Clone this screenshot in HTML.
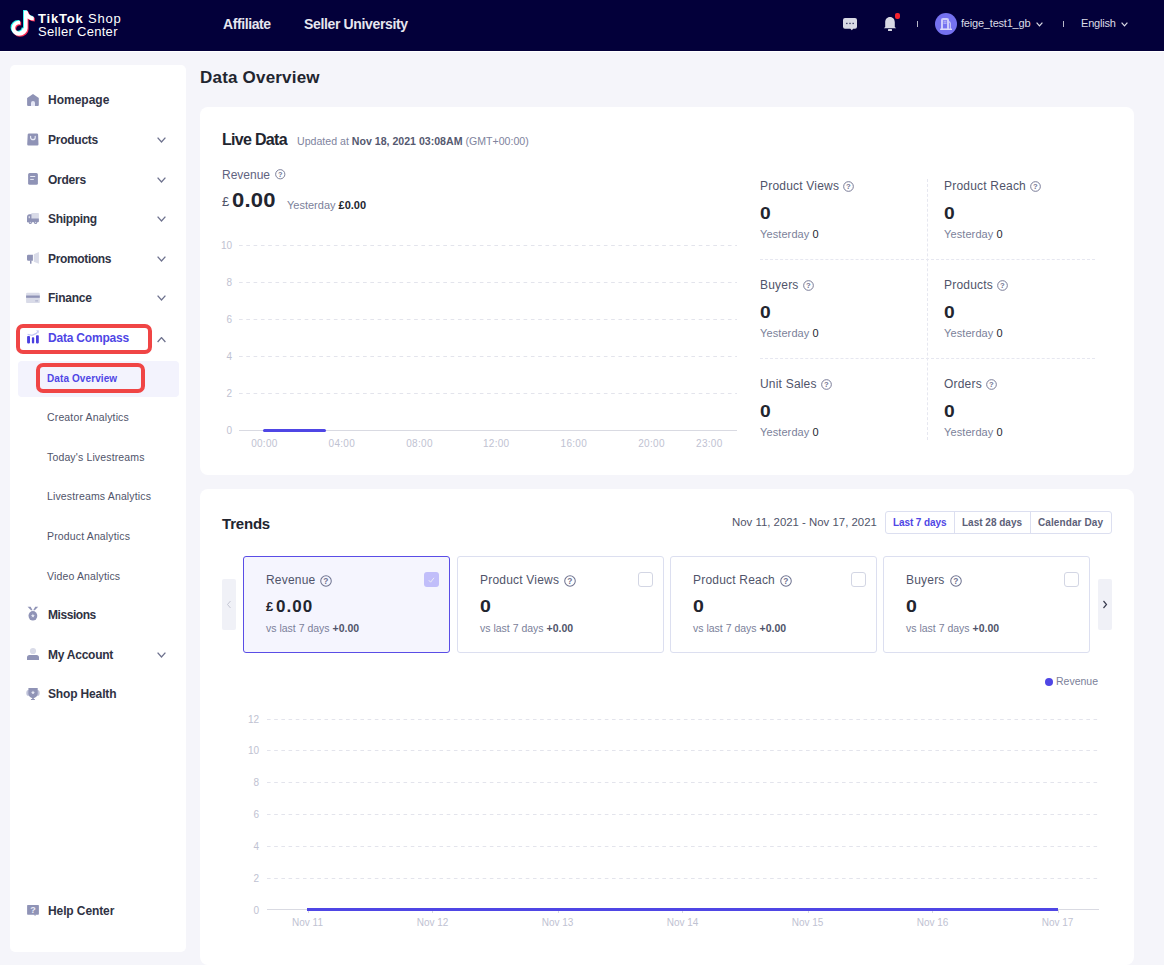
<!DOCTYPE html>
<html><head><meta charset="utf-8">
<style>
*{margin:0;padding:0;box-sizing:border-box}
html,body{width:1164px;height:965px;overflow:hidden;background:#f5f5fa;font-family:"Liberation Sans",sans-serif;color:#22252f}
.a{position:absolute;white-space:nowrap}
b{font-weight:bold}
</style></head><body>
<div class="a" style="left:0px;top:0px;width:1164px;height:51px;background:#03003a"></div>
<div class="a" style="left:0px;top:51px;width:1164px;height:1px;background:#fff"></div>
<svg class="a" style="left:9px;top:9px" width="30" height="32" viewBox="0 0 30 32"><path transform="translate(-0.9,-0.8)" fill="#25f4ee" d="M14.9 1.85H18.6Q19.3 7 24.8 7.8V11.6Q21 11.4 18.6 9.6V19.2A8.75 7.65 0 0 1 9.85 26.85A7.4 7.65 0 0 1 2.45 19.2A7.4 7.4 0 0 1 9.85 11.8H11.2V15.5A3.7 3.7 0 1 0 13.55 19.2H14.9Z"/><path transform="translate(1,1)" fill="#fe2c55" d="M14.9 1.85H18.6Q19.3 7 24.8 7.8V11.6Q21 11.4 18.6 9.6V19.2A8.75 7.65 0 0 1 9.85 26.85A7.4 7.65 0 0 1 2.45 19.2A7.4 7.4 0 0 1 9.85 11.8H11.2V15.5A3.7 3.7 0 1 0 13.55 19.2H14.9Z"/><path transform="translate(0,0)" fill="#fff" d="M14.9 1.85H18.6Q19.3 7 24.8 7.8V11.6Q21 11.4 18.6 9.6V19.2A8.75 7.65 0 0 1 9.85 26.85A7.4 7.65 0 0 1 2.45 19.2A7.4 7.4 0 0 1 9.85 11.8H11.2V15.5A3.7 3.7 0 1 0 13.55 19.2H14.9Z"/></svg>
<div class="a" style="left:38px;top:12px;font-size:13px;line-height:13px;font-weight:normal;color:#fff;letter-spacing:0.8px;"><b>TikTok</b> Shop</div>
<div class="a" style="left:38px;top:25px;font-size:13px;line-height:13px;font-weight:normal;color:#fff;letter-spacing:0.3px;">Seller Center</div>
<div class="a" style="left:223px;top:17px;font-size:14px;line-height:14px;font-weight:bold;color:#e6e6ef;letter-spacing:-0.4px;">Affiliate</div>
<div class="a" style="left:304px;top:17px;font-size:14px;line-height:14px;font-weight:bold;color:#e6e6ef;letter-spacing:-0.35px;">Seller University</div>
<svg class="a" style="left:843px;top:18px" width="14" height="13" viewBox="0 0 14 13"><path d="M2 0h10a2 2 0 0 1 2 2v6.8a2 2 0 0 1-2 2H10.2L8.8 12.3 7.4 10.8H2a2 2 0 0 1-2-2V2a2 2 0 0 1 2-2z" fill="#d8d9e4"/><rect x="3" y="4.8" width="1.6" height="1.3" fill="#4a4c70"/><rect x="6.2" y="4.8" width="1.6" height="1.3" fill="#4a4c70"/><rect x="9.4" y="4.8" width="1.6" height="1.3" fill="#4a4c70"/></svg>
<svg class="a" style="left:883px;top:16px" width="14" height="16" viewBox="0 0 14 16"><path d="M7 1c3 0 4.8 2.4 4.8 5.2V11l1.4 1.3H.8L2.2 11V6.2C2.2 3.4 4 1 7 1z" fill="#d8d9e4"/><rect x="5" y="13" width="4" height="2" rx=".5" fill="#d8d9e4"/></svg>
<div class="a" style="left:895px;top:13px;width:5px;height:6px;border-radius:2px;background:#f5222d"></div>
<div class="a" style="left:917px;top:21px;width:1px;height:6px;background:#b8b9c8"></div>
<div class="a" style="left:935px;top:13px;width:22px;height:22px;border-radius:50%;background:#7571f0"></div>
<svg class="a" style="left:939px;top:17px" width="14" height="14" viewBox="0 0 14 14"><path d="M2 13V3.1a2 2 0 0 1 2-2H8a2 2 0 0 1 2 2V13z" fill="#cfcdfa"/><rect x="4" y="3.2" width="4" height="8.4" fill="#7571f0"/><rect x="4.5" y="3.9" width="3" height=".7" fill="#cfcdfa"/><rect x="4.5" y="5.7" width="3" height=".8" fill="#e6e5fd"/><path d="M9.6 4.6Q11.3 4.9 11.3 6.4V13" fill="none" stroke="#cfcdfa" stroke-width="1.1"/><rect x="1.1" y="11.6" width="11.9" height="1.4" fill="#dcdafc"/></svg>
<div class="a" style="left:961px;top:18px;font-size:11px;line-height:11px;font-weight:normal;color:#dcdce6;letter-spacing:-0.2px;">feige_test1_gb</div>
<svg class="a" style="left:1036px;top:22px" width="7" height="4.5" viewBox="0 0 7 4.5"><path d="M0.6 0.6L3.5 3.9L6.4 0.6" fill="none" stroke="#dcdce6" stroke-width="1.2"/></svg>
<div class="a" style="left:1063px;top:21px;width:1px;height:6px;background:#b8b9c8"></div>
<div class="a" style="left:1081px;top:18px;font-size:11px;line-height:11px;font-weight:normal;color:#dcdce6;letter-spacing:-0.2px;">English</div>
<svg class="a" style="left:1121px;top:22px" width="7" height="4.5" viewBox="0 0 7 4.5"><path d="M0.6 0.6L3.5 3.9L6.4 0.6" fill="none" stroke="#dcdce6" stroke-width="1.2"/></svg>
<div class="a" style="left:10px;top:65px;width:176px;height:887px;background:#fff;border-radius:5px"></div>
<svg class="a" style="left:27px;top:93px" width="12" height="13" viewBox="0 0 12 13"><path d="M6 0.9L11.8 4.9V11.9a1 1 0 0 1-1 1H1.1a1 1 0 0 1-1-1V4.9z" fill="#8f93b6"/><path d="M4 13V10a2 2 0 0 1 4 0V13z" fill="#e6e8f6"/></svg>
<svg class="a" style="left:27px;top:133px" width="12" height="13" viewBox="0 0 12 13"><path d="M2 0.4H9.8a1.3 1.3 0 0 1 1.3 1.2L11.5 11.2a1.3 1.3 0 0 1-1.3 1.4H1.5a1.3 1.3 0 0 1-1.3-1.4L0.7 1.6a1.3 1.3 0 0 1 1.3-1.2z" fill="#8f93b6"/><path d="M3.6 3.3V4.4a2.3 2.3 0 0 0 4.6 0V3.3" fill="none" stroke="#e8eaf5" stroke-width="1.2" stroke-linecap="round"/></svg>
<svg class="a" style="left:27px;top:173px" width="12" height="12" viewBox="0 0 12 12"><rect x="1.1" y="0.1" width="9.8" height="11.6" rx="1.5" fill="#8f93b6"/><rect x="3.2" y="3" width="5" height="1" fill="#e8eaf5"/><rect x="3.2" y="5.9" width="3.6" height="1" fill="#e8eaf5"/></svg>
<svg class="a" style="left:27px;top:213px" width="12" height="11" viewBox="0 0 12 11"><rect x="4.2" y="0" width="7.7" height="6" rx=".8" fill="#d9dbe8"/><path d="M0 9V4.2Q0 1.2 2.6 1.2H4.5V5.4H11.9V8.2a1 1 0 0 1-1 1H0z" fill="#8f93b6"/><rect x="1.6" y="3.2" width="1.4" height="2" fill="#d9dbe8"/><circle cx="3.3" cy="9.4" r="1.6" fill="#8f93b6"/><circle cx="8.6" cy="9.4" r="1.6" fill="#8f93b6"/><circle cx="3.3" cy="9.4" r=".6" fill="#d9dbe8"/><circle cx="8.6" cy="9.4" r=".6" fill="#d9dbe8"/></svg>
<svg class="a" style="left:27px;top:251px" width="12" height="13" viewBox="0 0 12 13"><path d="M1.3 3.8H5.9V9.7H1.3a1.3 1.3 0 0 1-1.3-1.3V5.1a1.3 1.3 0 0 1 1.3-1.3z" fill="#8f93b6"/><rect x="3" y="9.2" width="1.5" height="3.6" rx=".5" fill="#8f93b6"/><path d="M6.8 3.2L11.9 1.1V12.8L6.8 10.7z" fill="#d9dbe8"/></svg>
<svg class="a" style="left:26px;top:292px" width="14" height="12" viewBox="0 0 14 12"><rect x="0.1" y="0.8" width="13.7" height="10.3" rx="1.2" fill="#d9dbe8"/><rect x="0.1" y="3.5" width="13.7" height="2.3" fill="#8f93b6"/><rect x="9.2" y="8.2" width="2.9" height="1.3" fill="#b4b7d0"/></svg>
<svg class="a" style="left:27px;top:329px" width="12" height="15" viewBox="0 0 12 15"><rect x="0.1" y="7.1" width="2.9" height="7.3" rx=".8" fill="#4a3fe0"/><rect x="4.9" y="8.3" width="2.3" height="6.1" rx=".8" fill="#4a3fe0"/><rect x="9" y="6.3" width="2.8" height="8.1" rx=".8" fill="#4a3fe0"/><path d="M0.6 5.3L5 6.4L9.4 4.4L10.6 3.3" fill="none" stroke="#c5c9f5" stroke-width="1.2"/><polygon points="9.2,1.2 12,1.6 11.4,4.6" fill="#c5c9f5"/></svg>
<svg class="a" style="left:27px;top:606px" width="12" height="15" viewBox="0 0 12 15"><path d="M0.6 0.8H3.6L5.6 4.2H4z" fill="#8f93b6"/><path d="M11.2 0.8H8.2L6.2 4.2H7.8z" fill="#8f93b6"/><ellipse cx="5.9" cy="9.8" rx="4.4" ry="4.8" fill="#8f93b6"/><polygon points="5.90,7.60 6.46,8.94 7.90,9.05 6.80,9.99 7.13,11.40 5.90,10.64 4.67,11.40 5.00,9.99 3.90,9.05 5.34,8.94" fill="#e4e6f2"/></svg>
<svg class="a" style="left:27px;top:647px" width="12" height="13" viewBox="0 0 12 13"><circle cx="6" cy="4" r="3.1" fill="#d9dbe8"/><path d="M0 12.9V10.4a2.5 2.5 0 0 1 2.5-2.5h7a2.5 2.5 0 0 1 2.5 2.5V12.9z" fill="#8f93b6"/></svg>
<svg class="a" style="left:26px;top:687px" width="14" height="14" viewBox="0 0 14 14"><ellipse cx="2.4" cy="5.9" rx="2.1" ry="2.9" fill="#bfc2d9"/><ellipse cx="11.6" cy="5.9" rx="2.1" ry="2.9" fill="#bfc2d9"/><path d="M2.4 1H11.7V6.5a4.65 4.65 0 0 1-9.3 0z" fill="#8f93b6"/><rect x="6.2" y="10.5" width="1.6" height="1.8" fill="#8f93b6"/><rect x="4.8" y="11.9" width="4.2" height="1.2" rx=".6" fill="#8f93b6"/><polygon points="7.00,3.50 7.56,4.84 9.00,4.95 7.90,5.89 8.23,7.30 7.00,6.54 5.77,7.30 6.10,5.89 5.00,4.95 6.44,4.84" fill="#e4e6f2"/></svg>
<svg class="a" style="left:27px;top:904px" width="12" height="13" viewBox="0 0 12 13"><rect x="0.1" y="1" width="11.8" height="9.7" rx=".7" fill="#8f93b6"/><polygon points="6.6,10.6 9,10.6 8.2,12.1" fill="#8f93b6"/><text x="6" y="9" font-size="9" font-weight="bold" text-anchor="middle" fill="#eceef8" font-family="Liberation Sans">?</text></svg>
<div class="a" style="left:48px;top:94px;font-size:12px;line-height:12px;font-weight:bold;color:#2f3243;letter-spacing:0px;">Homepage</div>
<div class="a" style="left:48px;top:134px;font-size:12px;line-height:12px;font-weight:bold;color:#2f3243;letter-spacing:-0.25px;">Products</div>
<svg class="a" style="left:157px;top:137px" width="9" height="5.6" viewBox="0 0 9 5.6"><path d="M0.6 0.6L4.5 5.0L8.4 0.6" fill="none" stroke="#6e728e" stroke-width="1.3"/></svg>
<div class="a" style="left:48px;top:174px;font-size:12px;line-height:12px;font-weight:bold;color:#2f3243;letter-spacing:-0.25px;">Orders</div>
<svg class="a" style="left:157px;top:177px" width="9" height="5.6" viewBox="0 0 9 5.6"><path d="M0.6 0.6L4.5 5.0L8.4 0.6" fill="none" stroke="#6e728e" stroke-width="1.3"/></svg>
<div class="a" style="left:48px;top:213px;font-size:12px;line-height:12px;font-weight:bold;color:#2f3243;letter-spacing:-0.33px;">Shipping</div>
<svg class="a" style="left:157px;top:216px" width="9" height="5.6" viewBox="0 0 9 5.6"><path d="M0.6 0.6L4.5 5.0L8.4 0.6" fill="none" stroke="#6e728e" stroke-width="1.3"/></svg>
<div class="a" style="left:48px;top:253px;font-size:12px;line-height:12px;font-weight:bold;color:#2f3243;letter-spacing:-0.35px;">Promotions</div>
<svg class="a" style="left:157px;top:256px" width="9" height="5.6" viewBox="0 0 9 5.6"><path d="M0.6 0.6L4.5 5.0L8.4 0.6" fill="none" stroke="#6e728e" stroke-width="1.3"/></svg>
<div class="a" style="left:48px;top:292px;font-size:12px;line-height:12px;font-weight:bold;color:#2f3243;letter-spacing:-0.25px;">Finance</div>
<svg class="a" style="left:157px;top:295px" width="9" height="5.6" viewBox="0 0 9 5.6"><path d="M0.6 0.6L4.5 5.0L8.4 0.6" fill="none" stroke="#6e728e" stroke-width="1.3"/></svg>
<div class="a" style="left:48px;top:332px;font-size:12px;line-height:12px;font-weight:bold;color:#4f46e5;letter-spacing:-0.2px;">Data Compass</div>
<svg class="a" style="left:157px;top:337px" width="9" height="5.6" viewBox="0 0 9 5.6"><path d="M0.6 5.0L4.5 0.6L8.4 5.0" fill="none" stroke="#6e728e" stroke-width="1.3"/></svg>
<div class="a" style="left:16px;top:324px;width:136px;height:30px;border:4px solid #f04545;border-radius:7px"></div>
<div class="a" style="left:18px;top:361px;width:161px;height:36px;background:#f3f3fd;border-radius:4px"></div>
<div class="a" style="left:36px;top:363px;width:109px;height:30px;border:4px solid #f04545;border-radius:7px"></div>
<div class="a" style="left:47px;top:374px;font-size:10px;line-height:10px;font-weight:bold;color:#4f46e5;letter-spacing:0.1px;">Data Overview</div>
<div class="a" style="left:47px;top:412px;font-size:10.5px;line-height:10.5px;font-weight:normal;color:#50546a;letter-spacing:0.15px;">Creator Analytics</div>
<div class="a" style="left:47px;top:452px;font-size:10.5px;line-height:10.5px;font-weight:normal;color:#50546a;letter-spacing:0.15px;">Today's Livestreams</div>
<div class="a" style="left:47px;top:491px;font-size:10.5px;line-height:10.5px;font-weight:normal;color:#50546a;letter-spacing:0.15px;">Livestreams Analytics</div>
<div class="a" style="left:47px;top:531px;font-size:10.5px;line-height:10.5px;font-weight:normal;color:#50546a;letter-spacing:0.15px;">Product Analytics</div>
<div class="a" style="left:47px;top:571px;font-size:10.5px;line-height:10.5px;font-weight:normal;color:#50546a;letter-spacing:0.15px;">Video Analytics</div>
<div class="a" style="left:48px;top:609px;font-size:12px;line-height:12px;font-weight:bold;color:#2f3243;letter-spacing:-0.45px;">Missions</div>
<div class="a" style="left:48px;top:649px;font-size:12px;line-height:12px;font-weight:bold;color:#2f3243;letter-spacing:-0.25px;">My Account</div>
<svg class="a" style="left:157px;top:652px" width="9" height="5.6" viewBox="0 0 9 5.6"><path d="M0.6 0.6L4.5 5.0L8.4 0.6" fill="none" stroke="#6e728e" stroke-width="1.3"/></svg>
<div class="a" style="left:48px;top:688px;font-size:12px;line-height:12px;font-weight:bold;color:#2f3243;letter-spacing:-0.15px;">Shop Health</div>
<div class="a" style="left:48px;top:905px;font-size:12px;line-height:12px;font-weight:bold;color:#2f3243;letter-spacing:-0.1px;">Help Center</div>
<div class="a" style="left:200px;top:69px;font-size:17px;line-height:17px;font-weight:bold;color:#22252f;letter-spacing:0.2px;">Data Overview</div>
<div class="a" style="left:200px;top:107px;width:934px;height:368px;background:#fff;border-radius:8px"></div>
<div class="a" style="left:222px;top:132px;font-size:16px;line-height:16px;font-weight:bold;color:#22252f;letter-spacing:-0.7px;">Live Data</div>
<div class="a" style="left:297px;top:136px;font-size:10.6px;line-height:10.6px;font-weight:normal;color:#80849e;letter-spacing:0px;">Updated at <b style="color:#555970">Nov 18, 2021 03:08AM</b> (GMT+00:00)</div>
<div class="a" style="left:222px;top:169px;font-size:12px;line-height:12px;font-weight:normal;color:#5f6380;letter-spacing:0px;">Revenue</div>
<svg class="a" style="left:275px;top:169px" width="10.5" height="10.5" viewBox="0 0 10 10"><circle cx="5" cy="5" r="4.4" fill="none" stroke="#6f7390" stroke-width=".85"/><text x="5" y="7.4" font-size="7" font-weight="bold" text-anchor="middle" fill="#6f7390" font-family="Liberation Sans">?</text></svg>
<div class="a" style="left:222px;top:195px;font-size:13px;line-height:13px;font-weight:normal;color:#50546a;letter-spacing:0px;">£</div>
<div class="a" style="left:232px;top:190px;font-size:20px;line-height:20px;font-weight:bold;color:#22252f;letter-spacing:0.2px;"><span style="display:inline-block;transform:scaleX(1.1);transform-origin:0 0">0.00</span></div>
<div class="a" style="left:287px;top:200px;font-size:11px;line-height:11px;font-weight:normal;color:#7b7f9a;letter-spacing:0px;">Yesterday <b style="color:#22252f">£0.00</b></div>
<div class="a" style="left:202px;width:30px;text-align:right;top:241px;font-size:10px;line-height:10px;font-weight:normal;color:#c0c2d2;letter-spacing:0px">10</div>
<div class="a" style="left:239px;top:245px;width:498px;height:1px;background-image:linear-gradient(to right,#e3e4ec 4px,transparent 4px);background-size:7.3px 1px"></div>
<div class="a" style="left:202px;width:30px;text-align:right;top:278px;font-size:10px;line-height:10px;font-weight:normal;color:#c0c2d2;letter-spacing:0px">8</div>
<div class="a" style="left:239px;top:282px;width:498px;height:1px;background-image:linear-gradient(to right,#e3e4ec 4px,transparent 4px);background-size:7.3px 1px"></div>
<div class="a" style="left:202px;width:30px;text-align:right;top:315px;font-size:10px;line-height:10px;font-weight:normal;color:#c0c2d2;letter-spacing:0px">6</div>
<div class="a" style="left:239px;top:319px;width:498px;height:1px;background-image:linear-gradient(to right,#e3e4ec 4px,transparent 4px);background-size:7.3px 1px"></div>
<div class="a" style="left:202px;width:30px;text-align:right;top:352px;font-size:10px;line-height:10px;font-weight:normal;color:#c0c2d2;letter-spacing:0px">4</div>
<div class="a" style="left:239px;top:356px;width:498px;height:1px;background-image:linear-gradient(to right,#e3e4ec 4px,transparent 4px);background-size:7.3px 1px"></div>
<div class="a" style="left:202px;width:30px;text-align:right;top:389px;font-size:10px;line-height:10px;font-weight:normal;color:#c0c2d2;letter-spacing:0px">2</div>
<div class="a" style="left:239px;top:393px;width:498px;height:1px;background-image:linear-gradient(to right,#e3e4ec 4px,transparent 4px);background-size:7.3px 1px"></div>
<div class="a" style="left:202px;width:30px;text-align:right;top:426px;font-size:10px;line-height:10px;font-weight:normal;color:#c0c2d2;letter-spacing:0px">0</div>
<div class="a" style="left:239px;top:430px;width:498px;height:1px;background:#d9dae2"></div>
<div class="a" style="left:239.39999999999998px;width:50px;text-align:center;top:439px;font-size:10px;line-height:10px;font-weight:normal;color:#c0c2d2;letter-spacing:0.3px">00:00</div>
<div class="a" style="left:316.8px;width:50px;text-align:center;top:439px;font-size:10px;line-height:10px;font-weight:normal;color:#c0c2d2;letter-spacing:0.3px">04:00</div>
<div class="a" style="left:394.5px;width:50px;text-align:center;top:439px;font-size:10px;line-height:10px;font-weight:normal;color:#c0c2d2;letter-spacing:0.3px">08:00</div>
<div class="a" style="left:471.2px;width:50px;text-align:center;top:439px;font-size:10px;line-height:10px;font-weight:normal;color:#c0c2d2;letter-spacing:0.3px">12:00</div>
<div class="a" style="left:548.8px;width:50px;text-align:center;top:439px;font-size:10px;line-height:10px;font-weight:normal;color:#c0c2d2;letter-spacing:0.3px">16:00</div>
<div class="a" style="left:626.5px;width:50px;text-align:center;top:439px;font-size:10px;line-height:10px;font-weight:normal;color:#c0c2d2;letter-spacing:0.3px">20:00</div>
<div class="a" style="left:684.3px;width:50px;text-align:center;top:439px;font-size:10px;line-height:10px;font-weight:normal;color:#c0c2d2;letter-spacing:0.3px">23:00</div>
<div class="a" style="left:263px;top:429px;width:63px;height:3px;background:#4f46e5;border-radius:1.5px"></div>
<div class="a" style="left:927px;top:179px;width:0px;height:261px;border-left:1px dashed #e6e7f0"></div>
<div class="a" style="left:760px;top:259px;width:335px;height:0px;border-top:1px dashed #e6e7f0"></div>
<div class="a" style="left:760px;top:358px;width:335px;height:0px;border-top:1px dashed #e6e7f0"></div>
<div class="a" style="left:760px;top:180px;font-size:12px;line-height:12px;font-weight:normal;color:#50546a;letter-spacing:0.2px;">Product Views</div>
<div class="a" style="left:760px;top:180px;font-size:12px;line-height:12px;letter-spacing:0.2px;color:transparent">Product Views<span style="display:inline-block;width:4px"></span><svg style="vertical-align:-2px" width="11" height="11" viewBox="0 0 10 10"><circle cx="5" cy="5" r="4.4" fill="none" stroke="#6f7390" stroke-width=".85"/><text x="5" y="7.4" font-size="7" font-weight="bold" text-anchor="middle" fill="#6f7390" font-family="Liberation Sans">?</text></svg></div>
<div class="a" style="left:760px;top:206px;font-size:16px;line-height:16px;font-weight:bold;color:#22252f;letter-spacing:0px;"><span style="display:inline-block;transform:scaleX(1.2);transform-origin:0 0">0</span></div>
<div class="a" style="left:760px;top:229px;font-size:11px;line-height:11px;font-weight:normal;color:#7b7f9a;letter-spacing:0.1px;">Yesterday <span style="color:#22252f">0</span></div>
<div class="a" style="left:944px;top:180px;font-size:12px;line-height:12px;font-weight:normal;color:#50546a;letter-spacing:0.2px;">Product Reach</div>
<div class="a" style="left:944px;top:180px;font-size:12px;line-height:12px;letter-spacing:0.2px;color:transparent">Product Reach<span style="display:inline-block;width:4px"></span><svg style="vertical-align:-2px" width="11" height="11" viewBox="0 0 10 10"><circle cx="5" cy="5" r="4.4" fill="none" stroke="#6f7390" stroke-width=".85"/><text x="5" y="7.4" font-size="7" font-weight="bold" text-anchor="middle" fill="#6f7390" font-family="Liberation Sans">?</text></svg></div>
<div class="a" style="left:944px;top:206px;font-size:16px;line-height:16px;font-weight:bold;color:#22252f;letter-spacing:0px;"><span style="display:inline-block;transform:scaleX(1.2);transform-origin:0 0">0</span></div>
<div class="a" style="left:944px;top:229px;font-size:11px;line-height:11px;font-weight:normal;color:#7b7f9a;letter-spacing:0.1px;">Yesterday <span style="color:#22252f">0</span></div>
<div class="a" style="left:760px;top:279px;font-size:12px;line-height:12px;font-weight:normal;color:#50546a;letter-spacing:0.2px;">Buyers</div>
<div class="a" style="left:760px;top:279px;font-size:12px;line-height:12px;letter-spacing:0.2px;color:transparent">Buyers<span style="display:inline-block;width:4px"></span><svg style="vertical-align:-2px" width="11" height="11" viewBox="0 0 10 10"><circle cx="5" cy="5" r="4.4" fill="none" stroke="#6f7390" stroke-width=".85"/><text x="5" y="7.4" font-size="7" font-weight="bold" text-anchor="middle" fill="#6f7390" font-family="Liberation Sans">?</text></svg></div>
<div class="a" style="left:760px;top:305px;font-size:16px;line-height:16px;font-weight:bold;color:#22252f;letter-spacing:0px;"><span style="display:inline-block;transform:scaleX(1.2);transform-origin:0 0">0</span></div>
<div class="a" style="left:760px;top:328px;font-size:11px;line-height:11px;font-weight:normal;color:#7b7f9a;letter-spacing:0.1px;">Yesterday <span style="color:#22252f">0</span></div>
<div class="a" style="left:944px;top:279px;font-size:12px;line-height:12px;font-weight:normal;color:#50546a;letter-spacing:0.2px;">Products</div>
<div class="a" style="left:944px;top:279px;font-size:12px;line-height:12px;letter-spacing:0.2px;color:transparent">Products<span style="display:inline-block;width:4px"></span><svg style="vertical-align:-2px" width="11" height="11" viewBox="0 0 10 10"><circle cx="5" cy="5" r="4.4" fill="none" stroke="#6f7390" stroke-width=".85"/><text x="5" y="7.4" font-size="7" font-weight="bold" text-anchor="middle" fill="#6f7390" font-family="Liberation Sans">?</text></svg></div>
<div class="a" style="left:944px;top:305px;font-size:16px;line-height:16px;font-weight:bold;color:#22252f;letter-spacing:0px;"><span style="display:inline-block;transform:scaleX(1.2);transform-origin:0 0">0</span></div>
<div class="a" style="left:944px;top:328px;font-size:11px;line-height:11px;font-weight:normal;color:#7b7f9a;letter-spacing:0.1px;">Yesterday <span style="color:#22252f">0</span></div>
<div class="a" style="left:760px;top:378px;font-size:12px;line-height:12px;font-weight:normal;color:#50546a;letter-spacing:0.2px;">Unit Sales</div>
<div class="a" style="left:760px;top:378px;font-size:12px;line-height:12px;letter-spacing:0.2px;color:transparent">Unit Sales<span style="display:inline-block;width:4px"></span><svg style="vertical-align:-2px" width="11" height="11" viewBox="0 0 10 10"><circle cx="5" cy="5" r="4.4" fill="none" stroke="#6f7390" stroke-width=".85"/><text x="5" y="7.4" font-size="7" font-weight="bold" text-anchor="middle" fill="#6f7390" font-family="Liberation Sans">?</text></svg></div>
<div class="a" style="left:760px;top:404px;font-size:16px;line-height:16px;font-weight:bold;color:#22252f;letter-spacing:0px;"><span style="display:inline-block;transform:scaleX(1.2);transform-origin:0 0">0</span></div>
<div class="a" style="left:760px;top:427px;font-size:11px;line-height:11px;font-weight:normal;color:#7b7f9a;letter-spacing:0.1px;">Yesterday <span style="color:#22252f">0</span></div>
<div class="a" style="left:944px;top:378px;font-size:12px;line-height:12px;font-weight:normal;color:#50546a;letter-spacing:0.2px;">Orders</div>
<div class="a" style="left:944px;top:378px;font-size:12px;line-height:12px;letter-spacing:0.2px;color:transparent">Orders<span style="display:inline-block;width:4px"></span><svg style="vertical-align:-2px" width="11" height="11" viewBox="0 0 10 10"><circle cx="5" cy="5" r="4.4" fill="none" stroke="#6f7390" stroke-width=".85"/><text x="5" y="7.4" font-size="7" font-weight="bold" text-anchor="middle" fill="#6f7390" font-family="Liberation Sans">?</text></svg></div>
<div class="a" style="left:944px;top:404px;font-size:16px;line-height:16px;font-weight:bold;color:#22252f;letter-spacing:0px;"><span style="display:inline-block;transform:scaleX(1.2);transform-origin:0 0">0</span></div>
<div class="a" style="left:944px;top:427px;font-size:11px;line-height:11px;font-weight:normal;color:#7b7f9a;letter-spacing:0.1px;">Yesterday <span style="color:#22252f">0</span></div>
<div class="a" style="left:200px;top:489px;width:934px;height:476px;background:#fff;border-radius:8px"></div>
<div class="a" style="left:222px;top:516px;font-size:15px;line-height:15px;font-weight:bold;color:#22252f;letter-spacing:-0.2px;">Trends</div>
<div class="a" style="left:732px;top:517px;font-size:11.4px;line-height:11.4px;font-weight:normal;color:#50546a;letter-spacing:0px;">Nov 11, 2021 - Nov 17, 2021</div>
<div class="a" style="left:885px;top:511px;width:227px;height:23px;border:1px solid #dcdff0;border-radius:3px"></div>
<div class="a" style="left:954px;top:512px;width:1px;height:21px;background:#dcdff0"></div>
<div class="a" style="left:1030px;top:512px;width:1px;height:21px;background:#dcdff0"></div>
<div class="a" style="left:893px;top:518px;font-size:10px;line-height:10px;font-weight:bold;color:#4f46e5;letter-spacing:-0.1px;">Last 7 days</div>
<div class="a" style="left:962px;top:518px;font-size:10px;line-height:10px;font-weight:bold;color:#5c6078;letter-spacing:0px;">Last 28 days</div>
<div class="a" style="left:1038px;top:518px;font-size:10px;line-height:10px;font-weight:bold;color:#5c6078;letter-spacing:0.1px;">Calendar Day</div>
<div class="a" style="left:222px;top:579px;width:14px;height:51px;background:#f0f1f7;border-radius:2px"></div>
<div class="a" style="left:1098px;top:579px;width:14px;height:51px;background:#f0f1f7;border-radius:2px"></div>
<svg class="a" style="left:226px;top:600px" width="6" height="9" viewBox="0 0 6 9"><path d="M4.5 1L1.5 4.5 4.5 8" fill="none" stroke="#c5c7d4" stroke-width="1"/></svg>
<svg class="a" style="left:1102px;top:600px" width="6" height="9" viewBox="0 0 6 9"><path d="M1.5 1L4.5 4.5 1.5 8" fill="none" stroke="#3a3d50" stroke-width="1.2"/></svg>
<div class="a" style="left:243px;top:556px;width:207px;height:97px;border:1px solid #5a4de6;background:#f5f5fe;border-radius:3px"></div>
<div class="a" style="left:266px;top:574px;font-size:12px;line-height:12px;font-weight:normal;color:#50546a;letter-spacing:0.2px;">Revenue</div>
<div class="a" style="left:266px;top:574px;font-size:12px;line-height:12px;letter-spacing:0.2px;color:transparent">Revenue<span style="display:inline-block;width:5px"></span><svg style="vertical-align:-2.5px" width="12" height="12" viewBox="0 0 10 10"><circle cx="5" cy="5" r="4.4" fill="none" stroke="#6f7390" stroke-width=".85"/><text x="5" y="7.4" font-size="7" font-weight="bold" text-anchor="middle" fill="#6f7390" font-family="Liberation Sans">?</text></svg></div>
<div class="a" style="left:266px;top:600px;font-size:13px;line-height:13px;font-weight:bold;color:#22252f;letter-spacing:0px;">£</div>
<div class="a" style="left:276px;top:598px;font-size:17px;line-height:17px;font-weight:bold;color:#22252f;letter-spacing:1.0px;">0.00</div>
<div class="a" style="left:424px;top:572px;width:15px;height:15px;background:#c1befa;border-radius:3px"></div>
<svg class="a" style="left:424px;top:572px" width="15" height="15" viewBox="0 0 15 15"><path d="M4.8 8.2l1.8 2 3.4-4.4" fill="none" stroke="#ececf4" stroke-width="1"/></svg>
<div class="a" style="left:266px;top:623px;font-size:10.5px;line-height:10.5px;font-weight:normal;color:#7b7f9a;letter-spacing:0px;">vs last 7 days <b style="color:#50546a">+0.00</b></div>
<div class="a" style="left:457px;top:556px;width:207px;height:97px;border:1px solid #dcdff0;background:#fff;border-radius:3px"></div>
<div class="a" style="left:480px;top:574px;font-size:12px;line-height:12px;font-weight:normal;color:#50546a;letter-spacing:0.2px;">Product Views</div>
<div class="a" style="left:480px;top:574px;font-size:12px;line-height:12px;letter-spacing:0.2px;color:transparent">Product Views<span style="display:inline-block;width:5px"></span><svg style="vertical-align:-2.5px" width="12" height="12" viewBox="0 0 10 10"><circle cx="5" cy="5" r="4.4" fill="none" stroke="#6f7390" stroke-width=".85"/><text x="5" y="7.4" font-size="7" font-weight="bold" text-anchor="middle" fill="#6f7390" font-family="Liberation Sans">?</text></svg></div>
<div class="a" style="left:480px;top:598px;font-size:17px;line-height:17px;font-weight:bold;color:#22252f;letter-spacing:0px;"><span style="display:inline-block;transform:scaleX(1.15);transform-origin:0 0">0</span></div>
<div class="a" style="left:638px;top:572px;width:15px;height:15px;border:1px solid #d3d6e4;border-radius:3px;background:#fff"></div>
<div class="a" style="left:480px;top:623px;font-size:10.5px;line-height:10.5px;font-weight:normal;color:#7b7f9a;letter-spacing:0px;">vs last 7 days <b style="color:#50546a">+0.00</b></div>
<div class="a" style="left:670px;top:556px;width:207px;height:97px;border:1px solid #dcdff0;background:#fff;border-radius:3px"></div>
<div class="a" style="left:693px;top:574px;font-size:12px;line-height:12px;font-weight:normal;color:#50546a;letter-spacing:0.2px;">Product Reach</div>
<div class="a" style="left:693px;top:574px;font-size:12px;line-height:12px;letter-spacing:0.2px;color:transparent">Product Reach<span style="display:inline-block;width:5px"></span><svg style="vertical-align:-2.5px" width="12" height="12" viewBox="0 0 10 10"><circle cx="5" cy="5" r="4.4" fill="none" stroke="#6f7390" stroke-width=".85"/><text x="5" y="7.4" font-size="7" font-weight="bold" text-anchor="middle" fill="#6f7390" font-family="Liberation Sans">?</text></svg></div>
<div class="a" style="left:693px;top:598px;font-size:17px;line-height:17px;font-weight:bold;color:#22252f;letter-spacing:0px;"><span style="display:inline-block;transform:scaleX(1.15);transform-origin:0 0">0</span></div>
<div class="a" style="left:851px;top:572px;width:15px;height:15px;border:1px solid #d3d6e4;border-radius:3px;background:#fff"></div>
<div class="a" style="left:693px;top:623px;font-size:10.5px;line-height:10.5px;font-weight:normal;color:#7b7f9a;letter-spacing:0px;">vs last 7 days <b style="color:#50546a">+0.00</b></div>
<div class="a" style="left:883px;top:556px;width:207px;height:97px;border:1px solid #dcdff0;background:#fff;border-radius:3px"></div>
<div class="a" style="left:906px;top:574px;font-size:12px;line-height:12px;font-weight:normal;color:#50546a;letter-spacing:0.2px;">Buyers</div>
<div class="a" style="left:906px;top:574px;font-size:12px;line-height:12px;letter-spacing:0.2px;color:transparent">Buyers<span style="display:inline-block;width:5px"></span><svg style="vertical-align:-2.5px" width="12" height="12" viewBox="0 0 10 10"><circle cx="5" cy="5" r="4.4" fill="none" stroke="#6f7390" stroke-width=".85"/><text x="5" y="7.4" font-size="7" font-weight="bold" text-anchor="middle" fill="#6f7390" font-family="Liberation Sans">?</text></svg></div>
<div class="a" style="left:906px;top:598px;font-size:17px;line-height:17px;font-weight:bold;color:#22252f;letter-spacing:0px;"><span style="display:inline-block;transform:scaleX(1.15);transform-origin:0 0">0</span></div>
<div class="a" style="left:1064px;top:572px;width:15px;height:15px;border:1px solid #d3d6e4;border-radius:3px;background:#fff"></div>
<div class="a" style="left:906px;top:623px;font-size:10.5px;line-height:10.5px;font-weight:normal;color:#7b7f9a;letter-spacing:0px;">vs last 7 days <b style="color:#50546a">+0.00</b></div>
<div class="a" style="left:1045px;top:678px;width:8px;height:8px;background:#4f46e5;border-radius:50%"></div>
<div class="a" style="left:1056px;top:676px;font-size:10.5px;line-height:10.5px;font-weight:normal;color:#7b7f9a;letter-spacing:0px;">Revenue</div>
<div class="a" style="left:229px;width:30px;text-align:right;top:715px;font-size:10px;line-height:10px;font-weight:normal;color:#c0c2d2;letter-spacing:0px">12</div>
<div class="a" style="left:267px;top:719px;width:832px;height:1px;background-image:linear-gradient(to right,#e3e4ec 4px,transparent 4px);background-size:7.2px 1px"></div>
<div class="a" style="left:229px;width:30px;text-align:right;top:746px;font-size:10px;line-height:10px;font-weight:normal;color:#c0c2d2;letter-spacing:0px">10</div>
<div class="a" style="left:267px;top:750px;width:832px;height:1px;background-image:linear-gradient(to right,#e3e4ec 4px,transparent 4px);background-size:7.2px 1px"></div>
<div class="a" style="left:229px;width:30px;text-align:right;top:778px;font-size:10px;line-height:10px;font-weight:normal;color:#c0c2d2;letter-spacing:0px">8</div>
<div class="a" style="left:267px;top:782px;width:832px;height:1px;background-image:linear-gradient(to right,#e3e4ec 4px,transparent 4px);background-size:7.2px 1px"></div>
<div class="a" style="left:229px;width:30px;text-align:right;top:810px;font-size:10px;line-height:10px;font-weight:normal;color:#c0c2d2;letter-spacing:0px">6</div>
<div class="a" style="left:267px;top:814px;width:832px;height:1px;background-image:linear-gradient(to right,#e3e4ec 4px,transparent 4px);background-size:7.2px 1px"></div>
<div class="a" style="left:229px;width:30px;text-align:right;top:842px;font-size:10px;line-height:10px;font-weight:normal;color:#c0c2d2;letter-spacing:0px">4</div>
<div class="a" style="left:267px;top:846px;width:832px;height:1px;background-image:linear-gradient(to right,#e3e4ec 4px,transparent 4px);background-size:7.2px 1px"></div>
<div class="a" style="left:229px;width:30px;text-align:right;top:874px;font-size:10px;line-height:10px;font-weight:normal;color:#c0c2d2;letter-spacing:0px">2</div>
<div class="a" style="left:267px;top:878px;width:832px;height:1px;background-image:linear-gradient(to right,#e3e4ec 4px,transparent 4px);background-size:7.2px 1px"></div>
<div class="a" style="left:229px;width:30px;text-align:right;top:906px;font-size:10px;line-height:10px;font-weight:normal;color:#c0c2d2;letter-spacing:0px">0</div>
<div class="a" style="left:267px;top:909px;width:832px;height:1px;background:#d9dae2"></div>
<div class="a" style="left:308px;top:910px;width:1px;height:3px;background:#d9dae2"></div>
<div class="a" style="left:282.5px;width:50px;text-align:center;top:918px;font-size:10px;line-height:10px;font-weight:normal;color:#c0c2d2;letter-spacing:0px">Nov 11</div>
<div class="a" style="left:432px;top:910px;width:1px;height:3px;background:#d9dae2"></div>
<div class="a" style="left:407.5px;width:50px;text-align:center;top:918px;font-size:10px;line-height:10px;font-weight:normal;color:#c0c2d2;letter-spacing:0px">Nov 12</div>
<div class="a" style="left:558px;top:910px;width:1px;height:3px;background:#d9dae2"></div>
<div class="a" style="left:532.5px;width:50px;text-align:center;top:918px;font-size:10px;line-height:10px;font-weight:normal;color:#c0c2d2;letter-spacing:0px">Nov 13</div>
<div class="a" style="left:682px;top:910px;width:1px;height:3px;background:#d9dae2"></div>
<div class="a" style="left:657.5px;width:50px;text-align:center;top:918px;font-size:10px;line-height:10px;font-weight:normal;color:#c0c2d2;letter-spacing:0px">Nov 14</div>
<div class="a" style="left:808px;top:910px;width:1px;height:3px;background:#d9dae2"></div>
<div class="a" style="left:782.5px;width:50px;text-align:center;top:918px;font-size:10px;line-height:10px;font-weight:normal;color:#c0c2d2;letter-spacing:0px">Nov 15</div>
<div class="a" style="left:932px;top:910px;width:1px;height:3px;background:#d9dae2"></div>
<div class="a" style="left:907.5px;width:50px;text-align:center;top:918px;font-size:10px;line-height:10px;font-weight:normal;color:#c0c2d2;letter-spacing:0px">Nov 16</div>
<div class="a" style="left:1058px;top:910px;width:1px;height:3px;background:#d9dae2"></div>
<div class="a" style="left:1032.5px;width:50px;text-align:center;top:918px;font-size:10px;line-height:10px;font-weight:normal;color:#c0c2d2;letter-spacing:0px">Nov 17</div>
<div class="a" style="left:307px;top:908px;width:751px;height:3px;background:#4f46e5"></div>
</body></html>
